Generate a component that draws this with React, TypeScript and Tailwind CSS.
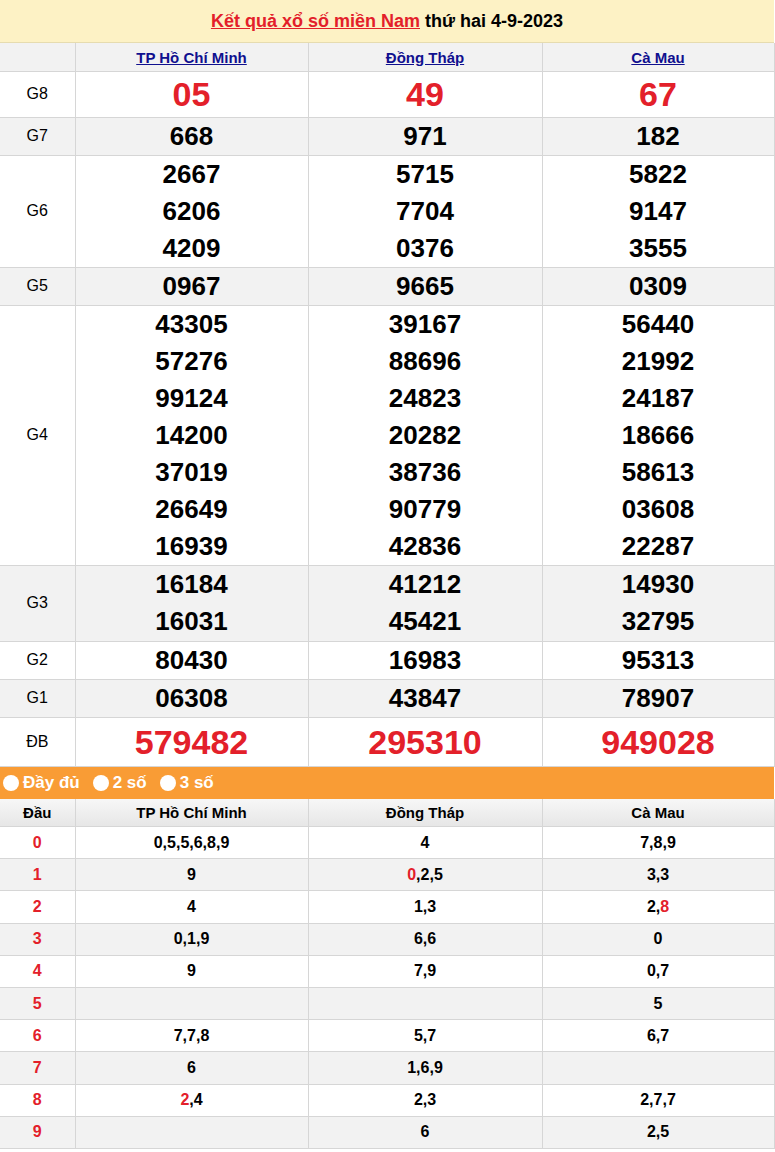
import React from "react";

const provinces = ["TP Hồ Chí Minh", "Đồng Tháp", "Cà Mau"];

type Row = { label: string; nums: string[][]; cls: string; bg: string; pad?: string };

const rows: Row[] = [
  { label: "G8", nums: [["05"], ["49"], ["67"]], cls: "text-[34px] text-[#e3202a] leading-[45px]", bg: "bg-white" },
  { label: "G7", nums: [["668"], ["971"], ["182"]], cls: "text-[26px] text-black leading-[37px]", bg: "bg-[#f2f2f2]" },
  { label: "G6", nums: [["2667", "6206", "4209"], ["5715", "7704", "0376"], ["5822", "9147", "3555"]], cls: "text-[26px] text-black leading-[37px]", bg: "bg-white" },
  { label: "G5", nums: [["0967"], ["9665"], ["0309"]], cls: "text-[26px] text-black leading-[37px]", bg: "bg-[#f2f2f2]" },
  {
    label: "G4",
    nums: [
      ["43305", "57276", "99124", "14200", "37019", "26649", "16939"],
      ["39167", "88696", "24823", "20282", "38736", "90779", "42836"],
      ["56440", "21992", "24187", "18666", "58613", "03608", "22287"],
    ],
    cls: "text-[26px] text-black leading-[37px]",
    bg: "bg-white",
  },
  { label: "G3", nums: [["16184", "16031"], ["41212", "45421"], ["14930", "32795"]], cls: "text-[26px] text-black leading-[37px] pb-[1px]", bg: "bg-[#f2f2f2]" },
  { label: "G2", nums: [["80430"], ["16983"], ["95313"]], cls: "text-[26px] text-black leading-[37px]", bg: "bg-white" },
  { label: "G1", nums: [["06308"], ["43847"], ["78907"]], cls: "text-[26px] text-black leading-[37px]", bg: "bg-[#f2f2f2]" },
  { label: "ĐB", nums: [["579482"], ["295310"], ["949028"]], cls: "text-[34px] text-[#e3202a] leading-[48px]", bg: "bg-white" },
];

type Part = [string, boolean];
const dau: Part[][][] = [
  [[["0,5,5,6,8,9", false]], [["4", false]], [["7,8,9", false]]],
  [[["9", false]], [["0", true], [",2,5", false]], [["3,3", false]]],
  [[["4", false]], [["1,3", false]], [["2,", false], ["8", true]]],
  [[["0,1,9", false]], [["6,6", false]], [["0", false]]],
  [[["9", false]], [["7,9", false]], [["0,7", false]]],
  [[], [], [["5", false]]],
  [[["7,7,8", false]], [["5,7", false]], [["6,7", false]]],
  [[["6", false]], [["1,6,9", false]], []],
  [[["2", true], [",4", false]], [["2,3", false]], [["2,7,7", false]]],
  [[], [["6", false]], [["2,5", false]]],
];

export default function App() {
  return (
    <div className="w-[775px] bg-white font-['Liberation_Sans',Arial,sans-serif] text-black">
      <div className="w-[774px]">
        <div className="h-[43px] bg-[#fdf2c5] flex items-center justify-center text-[18px] font-bold border-b border-[#e6dcb0]">
          <span className="text-[#e3202a] underline mr-[5px]">Kết quả xổ số miền Nam</span>
          <span>thứ hai 4-9-2023</span>
        </div>
        <table className="w-[774px] border-collapse table-fixed">
          <colgroup>
            <col className="w-[75px]" />
            <col className="w-[233px]" />
            <col className="w-[234px]" />
            <col className="w-[232px]" />
          </colgroup>
          <tbody>
            <tr className="h-[28px] bg-[#f2f2f2]">
              <td className="border border-[#d6d6d6] border-t-0 border-l-0"></td>
              {provinces.map((p) => (
                <td key={p} className="border border-[#d6d6d6] border-t-0 text-center text-[15px] font-bold text-[#10108f] underline pt-[2px]">
                  {p}
                </td>
              ))}
            </tr>
            {rows.map((r) => (
              <tr key={r.label} className={r.bg}>
                <td className="border border-[#d6d6d6] border-l-0 text-center text-[16px] align-middle">{r.label}</td>
                {r.nums.map((col, i) => (
                  <td key={i} className={`border border-[#d6d6d6] text-center font-bold align-middle ${r.cls}`}>
                    {col.map((n) => (
                      <div key={n}>{n}</div>
                    ))}
                  </td>
                ))}
              </tr>
            ))}
          </tbody>
        </table>
        <div className="h-[32px] bg-[#f99c35] flex items-center pl-[3px] text-white font-bold text-[17px] gap-[13px]">
          {["Đầy đủ", "2 số", "3 số"].map((t) => (
            <div key={t} className="flex items-center gap-[4px]">
              <span className="w-[16px] h-[16px] rounded-full bg-white inline-block"></span>
              <span>{t}</span>
            </div>
          ))}
        </div>
        <table className="w-[774px] border-collapse table-fixed text-[16px] font-bold">
          <colgroup>
            <col className="w-[75px]" />
            <col className="w-[233px]" />
            <col className="w-[234px]" />
            <col className="w-[232px]" />
          </colgroup>
          <tbody>
            <tr className="h-[28px] bg-gradient-to-b from-[#f7f7f7] to-[#e6e6e6] text-[15px]">
              <td className="border border-[#d6d6d6] border-t-0 border-l-0 text-center pt-[2px]">Đầu</td>
              {provinces.map((p) => (
                <td key={p} className="border border-[#d6d6d6] border-t-0 text-center pt-[2px]">
                  {p}
                </td>
              ))}
            </tr>
            {dau.map((r, idx) => (
              <tr key={idx} className={`h-[32.2px] ${idx % 2 === 1 ? "bg-[#f2f2f2]" : "bg-white"}`}>
                <td className="border border-[#d6d6d6] border-l-0 text-center text-[#e3202a]">{idx}</td>
                {r.map((cell, i) => (
                  <td key={i} className="border border-[#d6d6d6] text-center">
                    {cell.map(([t, red], k) => (
                      <span key={k} className={red ? "text-[#e3202a]" : ""}>
                        {t}
                      </span>
                    ))}
                  </td>
                ))}
              </tr>
            ))}
          </tbody>
        </table>
      </div>
    </div>
  );
}
